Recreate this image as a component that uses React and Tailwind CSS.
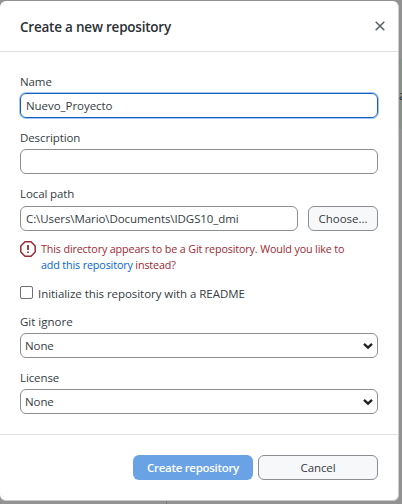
import React from 'react';

const text = 'block whitespace-nowrap leading-4';

function Label({ children, className = '' }) {
  return <span className={`${text} ${className}`}>{children}</span>;
}

function Select({ className }) {
  return (
    <div className={`flex h-[25px] items-center justify-between rounded-[6px] border border-[#8b8f94] bg-white pr-[4px] pl-[4px] ${className}`}>
      <span className={`${text} pt-px tracking-[-0.1px]`}>None</span>
      <svg className="h-[8px] w-[10px]" viewBox="0 0 10 8" fill="none" stroke="#1c2024" strokeWidth="2.3">
        <path d="M1 1.8 L5 5.6 L9 1.8" />
      </svg>
    </div>
  );
}

export default function App() {
  return (
    <div className="relative h-[504px] w-[402px] overflow-hidden bg-[#929292] pt-px font-['Open_Sans',sans-serif] text-[11.5px] text-[#363c43]">
      <div className="absolute top-[59px] right-0 h-[70px] w-[4px] bg-[#879189]">
        <span className="absolute top-[29px] left-[1px] text-[12px] leading-4 text-[#24292e]">a</span>
      </div>
      <div className="absolute bottom-0 left-[166px] h-[3px] w-px bg-[#77797b]" />

      <div className="relative flex h-[500px] w-[399px] flex-col rounded-[6px] border-r border-b border-[#c9cbcd] bg-white">
        <header className="flex h-[51px] shrink-0 items-center justify-between border-b border-[#dfe2e5] pr-[13px] pl-[20px]">
          <h1 className="pt-[2px] text-[13.5px] leading-5 font-semibold tracking-[-0.22px] whitespace-nowrap text-[#2b3036]">Create a new repository</h1>
          <svg className="h-[10px] w-[10px]" viewBox="0 0 10 10" fill="none" stroke="#596069" strokeWidth="1.5">
            <path d="M.7 .7 L9.3 9.3 M9.3 .7 L.7 9.3" />
          </svg>
        </header>

        <main className="flex h-[382px] shrink-0 flex-col px-[20px] pt-[22px]">
          <Label className="tracking-[-0.1px]">Name</Label>
          <div className="mt-[3px] flex h-[25px] items-center rounded-[6px] border border-[#1560bd] pl-[5px] shadow-[0_0_0_1px_#a3c7f0]">
            <span className={`${text} pt-px tracking-[-0.05px]`}>Nuevo_Proyecto</span>
          </div>

          <Label className="mt-[12px] tracking-[-0.1px]">Description</Label>
          <div className="mt-[3px] h-[25px] rounded-[6px] border border-[#8b8f94]" />

          <Label className="mt-[12px] tracking-[-0.1px]">Local path</Label>
          <div className="mt-[4px] flex gap-[10px]">
            <div className="flex h-[25px] w-[278px] items-center rounded-[6px] border border-[#8b8f94] pl-[5px]">
              <span className={`${text} tracking-[-0.08px]`}>C:\Users\Mario\Documents\IDGS10_dmi</span>
            </div>
            <button className="flex h-[25px] w-[70px] items-center justify-center rounded-[6px] border border-[#8b8f94] bg-[#f6f8fa]">
              <span className={text}>Choose...</span>
            </button>
          </div>

          <div className="mt-[10px] flex h-[32px] gap-[5px] text-[10.75px] tracking-[-0.14px] text-[#9e2832]">
            <svg className="h-[16px] w-[16px] shrink-0" viewBox="0 0 16 16" fill="none" stroke="#9e2832" strokeWidth="1.5">
              <path d="M5 .8 H11 L15.2 5 V11 L11 15.2 H5 L.8 11 V5 Z" />
              <path d="M8 4 V9 M8 10.5 V12" strokeWidth="1.8" />
            </svg>
            <div>
              <span className={text}>This directory appears to be a Git repository. Would you like to</span>
              <span className={text}><a className="text-[#0366d6]">add this repository</a> instead?</span>
            </div>
          </div>

          <div className="mt-[13px] flex h-[16px] items-center gap-[5px]">
            <span className="-mt-[3px] h-[13px] w-[13px] rounded-[2px] border border-[#6d7074] bg-white" />
            <span className={`${text} tracking-[-0.05px]`}>Initialize this repository with a README</span>
          </div>

          <Label className="mt-[12px]">Git ignore</Label>
          <Select className="mt-[3px]" />
          <Label className="mt-[12px] tracking-[-0.1px]">License</Label>
          <Select className="mt-[3px]" />
        </main>

        <footer className="flex grow justify-end gap-[5px] border-t border-[#dfe2e5] pt-[20px] pr-[20px]">
          <button className="flex h-[25px] w-[120px] items-center justify-center rounded-[6px] bg-[#6aa3e5] text-white">
            <span className={`${text} pt-px font-semibold tracking-[-0.3px]`}>Create repository</span>
          </button>
          <button className="flex h-[25px] w-[120px] items-center justify-center rounded-[6px] border border-[#8b8f94] bg-[#f6f8fa]">
            <span className={`${text} pt-px tracking-[-0.1px]`}>Cancel</span>
          </button>
        </footer>
      </div>
    </div>
  );
}
